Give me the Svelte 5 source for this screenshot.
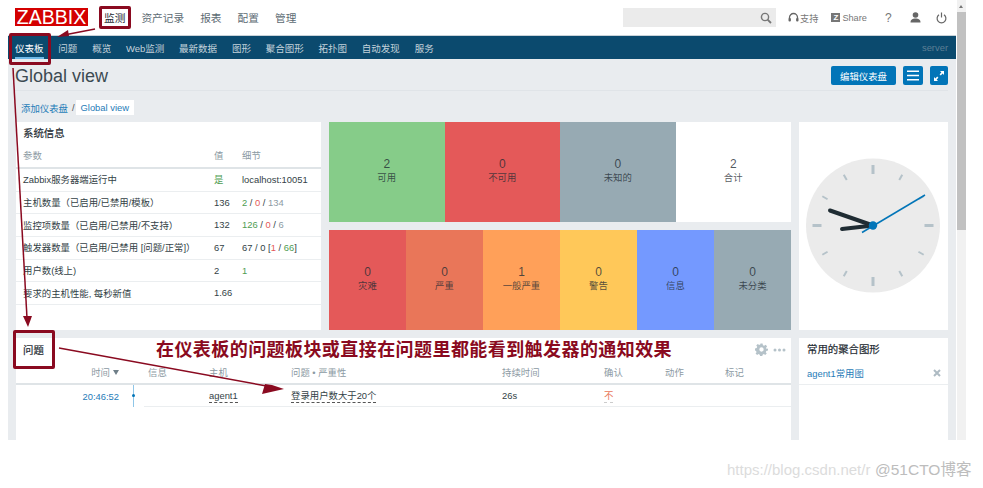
<script>
  const topnav = ['资产记录', '报表', '配置', '管理'];
  const subnav = ['问题', '概览', 'Web监测', '最新数据', '图形', '聚合图形', '拓扑图', '自动发现', '服务'];
  const hosts = [
    { n: 2, l: '可用', c: 'green' },
    { n: 0, l: '不可用', c: 'red' },
    { n: 0, l: '未知的', c: 'grey' },
    { n: 2, l: '合计', c: 'white' }
  ];
  const sev = [
    { n: 0, l: '灾难', c: 'red' },
    { n: 0, l: '严重', c: 'coral' },
    { n: 1, l: '一般严重', c: 'orange' },
    { n: 0, l: '警告', c: 'yellow' },
    { n: 0, l: '信息', c: 'blue' },
    { n: 0, l: '未分类', c: 'grey' }
  ];
  const ticks = Array.from({ length: 12 }, (_, i) => i * 30);
</script>

<div class="page">
  <header class="top">
    <div class="logo">ZABBIX</div>
    <nav class="mainnav">
      <span class="active">监测</span>
      {#each topnav as t}<span>{t}</span>{/each}
    </nav>
    <div class="search">
      <svg width="12" height="12" viewBox="0 0 12 12"><circle cx="5" cy="5" r="3.6" fill="none" stroke="#777" stroke-width="1.4"/><path d="M7.6 7.6 11 11" stroke="#777" stroke-width="1.8"/></svg>
    </div>
    <div class="tools">
      <span class="tool t-support">
        <svg width="11" height="12" viewBox="0 0 11 12"><path d="M1.5 7V5.5a4 4 0 0 1 8 0V7" fill="none" stroke="#666" stroke-width="1.3"/><rect x="0.5" y="6" width="2.4" height="3.6" rx="1" fill="#666"/><rect x="8.1" y="6" width="2.4" height="3.6" rx="1" fill="#666"/></svg>
        <span>支持</span>
      </span>
      <span class="tool t-share">
        <span class="zbox">Z</span>
        <span>Share</span>
      </span>
      <span class="tool t-help">?</span>
      <svg class="t-user" width="11" height="11" viewBox="0 0 11 11"><circle cx="5.5" cy="3" r="2.8" fill="#666"/><path d="M0.5 10.5c0-3 2-4 5-4s5 1 5 4z" fill="#666"/></svg>
      <svg class="t-power" width="11" height="12" viewBox="0 0 11 12"><path d="M3 2.8a4.4 4.4 0 1 0 5 0" fill="none" stroke="#666" stroke-width="1.2"/><path d="M5.5 0.5v5" stroke="#666" stroke-width="1.2"/></svg>
    </div>
  </header>

  <nav class="subnav">
    <span class="current">仪表板</span>
    {#each subnav as s}<span>{s}</span>{/each}
    <span class="server">server</span>
  </nav>

  <main class="content">
    <div class="titlebar">
      <h1>Global view</h1>
      <div class="actions">
        <button class="btn edit">编辑仪表盘</button>
        <button class="btn icon" aria-label="menu">
          <svg width="14" height="11" viewBox="0 0 14 11"><path d="M1 1.2h12M1 5.5h12M1 9.8h12" stroke="#fff" stroke-width="1.5"/></svg>
        </button>
        <button class="btn icon small" aria-label="fullscreen">
          <svg width="12" height="12" viewBox="0 0 12 12"><path d="M7 1h4v4L9.6 3.6 7.8 5.4 6.6 4.2 8.4 2.4zM5 11H1V7l1.4 1.4 1.8-1.8 1.2 1.2-1.8 1.8z" fill="#fff"/></svg>
        </button>
      </div>
    </div>

    <div class="crumbs">
      <a href="#a">添加仪表盘</a>
      <span class="sep">/</span>
      <span class="crumb">Global view</span>
    </div>

    <div class="grid">
      <section class="card sysinfo">
        <h2>系统信息</h2>
        <table>
          <colgroup><col class="c1" /><col class="c2" /><col /></colgroup>
          <thead><tr><th>参数</th><th>值</th><th>细节</th></tr></thead>
          <tbody>
            <tr><td>Zabbix服务器端运行中</td><td class="g">是</td><td>localhost:10051</td></tr>
            <tr><td>主机数量（已启用/已禁用/模板）</td><td>136</td><td><span class="g">2</span> / <span class="r">0</span> / <span class="m">134</span></td></tr>
            <tr><td>监控项数量（已启用/已禁用/不支持）</td><td>132</td><td><span class="g">126</span> / <span class="r">0</span> / <span class="m">6</span></td></tr>
            <tr><td>触发器数量（已启用/已禁用 [问题/正常]）</td><td>67</td><td>67 / 0 [<span class="r">1</span> / <span class="g">66</span>]</td></tr>
            <tr><td>用户数(线上)</td><td>2</td><td><span class="g">1</span></td></tr>
            <tr><td>要求的主机性能, 每秒新值</td><td>1.66</td><td></td></tr>
          </tbody>
        </table>
      </section>

      <section class="tiles hoststat">
        {#each hosts as h}
          <div class="tile {h.c}"><b>{h.n}</b><span>{h.l}</span></div>
        {/each}
      </section>

      <section class="card clock">
        <svg width="149" height="208" viewBox="0 0 149 208">
          <circle cx="74" cy="103.5" r="67" fill="#ebebeb"/>
          {#each ticks as a}
            <rect
              x={a % 90 === 0 ? 72.5 : 73}
              y={a % 90 === 0 ? 43 : 45}
              width={a % 90 === 0 ? 3 : 2}
              height={a % 90 === 0 ? 9 : 6}
              fill="#b5c2c9"
              transform="rotate({a} 74 103.5)"
            />
          {/each}
          <path d="M74 103.5 31 88.5" stroke="#1f2c33" stroke-width="4" stroke-linecap="round"/>
          <path d="M74 103.5 43 107" stroke="#1f2c33" stroke-width="4" stroke-linecap="round"/>
          <path d="M63 110.5 126 73" stroke="#0275b8" stroke-width="1.5"/>
          <circle cx="74" cy="103.5" r="4.2" fill="#0275b8"/>
        </svg>
      </section>

      <section class="tiles sevstat">
        {#each sev as s}
          <div class="tile {s.c}"><b>{s.n}</b><span>{s.l}</span></div>
        {/each}
      </section>

      <section class="card problems">
        <div class="wheader">
          <h2>问题</h2>
          <div class="wtools">
            <svg width="13" height="13" viewBox="0 0 24 24"><path fill="#b5c2c9" d="M10 1h4l.6 3.1 2.3 1 2.6-1.8 2.8 2.8-1.8 2.6 1 2.3L24 10v4l-3.1.6-1 2.3 1.8 2.6-2.8 2.8-2.6-1.8-2.3 1-.6 3.1h-4l-.6-3.1-2.3-1-2.6 1.8-2.8-2.8 1.8-2.6-1-2.3L0 14v-4l3.1-.6 1-2.3-1.8-2.6 2.8-2.8 2.6 1.8 2.3-1zM12 8a4 4 0 1 0 0 8 4 4 0 0 0 0-8z"/></svg>
            <svg width="13" height="4" viewBox="0 0 13 4"><circle cx="2" cy="2" r="1.5" fill="#b5c2c9"/><circle cx="6.5" cy="2" r="1.5" fill="#b5c2c9"/><circle cx="11" cy="2" r="1.5" fill="#b5c2c9"/></svg>
          </div>
        </div>
        <div class="prow phead">
          <span class="time">时间 <i class="down"></i></span><span class="mark"></span><span>信息</span><span>主机</span><span>问题 • 严重性</span><span>持续时间</span><span>确认</span><span>动作</span><span>标记</span>
        </div>
        <div class="prow pbody">
          <span class="time link">20:46:52</span>
          <span class="mark"><i></i></span>
          <span></span>
          <span><u>agent1</u></span>
          <span><u>登录用户数大于20个</u></span>
          <span>26s</span>
          <span><u class="no">不</u></span>
          <span></span>
          <span></span>
        </div>
      </section>

      <section class="card favs">
        <h2>常用的聚合图形</h2>
        <div class="favrow">
          <a href="#b">agent1常用图</a>
          <svg width="8" height="8" viewBox="0 0 8 8"><path d="M1 1l6 6M7 1 1 7" stroke="#aebbc3" stroke-width="2"/></svg>
        </div>
      </section>
    </div>
  </main>

  <div class="scrollbar">
    <span class="arrow"></span>
    <span class="thumb"></span>
  </div>

  <div class="hl hl-a"></div>
  <div class="hl hl-b"></div>
  <div class="hl hl-c"></div>

  <svg class="arrows" width="983" height="488" viewBox="0 0 983 488">
    <path d="M95 29 64 35" stroke="#8a0a20" stroke-width="1.5"/>
    <path d="M57 37 68 30 69 36z" fill="#8a0a20"/>
    <path d="M13 68 27 318" stroke="#8a0a20" stroke-width="1.5"/>
    <path d="M28 327 23 316 32 316z" fill="#8a0a20"/>
    <path d="M59 348 272 387" stroke="#8a0a20" stroke-width="1.5"/>
    <path d="M284 389 262 394 265 384 272 385z" fill="#8a0a20"/>
  </svg>

  <div class="note">在仪表板的问题板块或直接在问题里都能看到触发器的通知效果</div>

  <div class="wm wm1">https://blog.csdn.net/r</div>
  <div class="wm wm2">@51CTO博客</div>
</div>

<style>
  :global(body) {
    margin: 0;
    background: #fff;
  }
  .page {
    position: relative;
    width: 983px;
    height: 488px;
    overflow: hidden;
    font-family: "Liberation Sans", "Noto Sans CJK SC", sans-serif;
    color: #1f2c33;
    font-size: 9.4px;
  }
  .top {
    width: 948px;
    margin-left: 8px;
    height: 36px;
    box-sizing: border-box;
    display: flex;
    align-items: flex-start;
    padding: 0 8px 0 7px;
    background: #fff;
    border-bottom: 1px solid #c9d2d8;
  }
  .logo {
    width: 73px;
    height: 18px;
    margin-top: 8px;
    background: #d40000;
    color: #fff;
    font-size: 19.5px;
    line-height: 18px;
    text-align: center;
  }
  .mainnav {
    display: flex;
    gap: 16px;
    margin-left: 16px;
    margin-top: 11px;
    font-size: 10.7px;
    line-height: 14px;
    color: #5c6b73;
  }
  .mainnav .active {
    color: #1f2c33;
    position: relative;
    z-index: 3;
  }
  .search {
    width: 153px;
    height: 19px;
    margin-top: 8px;
    margin-left: auto;
    background: #ebebeb;
    display: flex;
    align-items: center;
    justify-content: flex-end;
    padding-right: 4px;
    box-sizing: border-box;
  }
  .tools {
    width: 172px;
    flex: none;
    margin-top: 10px;
    display: flex;
    align-items: center;
    height: 15px;
    color: #777;
    font-size: 9.2px;
    white-space: nowrap;
  }
  .tools > * { flex: none; }
  .tool {
    display: flex;
    align-items: center;
    gap: 1px;
  }
  .t-support { margin-left: 12px; }
  .t-share { margin-left: 13px; gap: 2px; }
  .zbox {
    width: 9px;
    height: 9px;
    background: #777;
    color: #fff;
    font-size: 8px;
    font-weight: 700;
    line-height: 9px;
    text-align: center;
  }
  .t-help { margin-left: 18px; font-size: 12px; }
  .t-user { margin-left: 18px; }
  .t-power { margin-left: 15px; }

  .subnav {
    width: 948px;
    margin-left: 8px;
    height: 23px;
    box-sizing: border-box;
    padding: 0 8px 0 7px;
    background: #0b4a6e;
    color: #c3d2db;
    display: flex;
    align-items: center;
    gap: 14.8px;
    font-size: 9.5px;
  }
  .subnav .current {
    color: #fff;
    position: relative;
    z-index: 3;
  }
  .subnav .current::after {
    content: "";
    position: absolute;
    left: 0;
    right: 0;
    top: 16px;
    height: 2px;
    background: #6fb9e6;
  }
  .subnav .server {
    margin-left: auto;
    color: #5d7f95;
    font-size: 9.4px;
  }

  .content {
    width: 948px;
    margin-left: 8px;
    height: 381px;
    overflow: hidden;
    background: #e9ecef;
    padding: 0 8px 0 7px;
    box-sizing: border-box;
  }
  .titlebar {
    height: 31px;
    border-bottom: 1px solid #e0e4e8;
    display: flex;
    justify-content: space-between;
    align-items: flex-start;
  }
  h1 {
    margin: 7px 0 0;
    font-size: 18px;
    font-weight: 400;
    line-height: 21px;
    color: #3c4a52;
  }
  .actions {
    display: flex;
    gap: 7px;
    margin-top: 7px;
  }
  .btn {
    border: 0;
    padding: 0;
    height: 19px;
    border-radius: 2px;
    background: #0275b8;
    color: #fff;
    font: inherit;
    font-size: 9.4px;
    display: flex;
    align-items: center;
    justify-content: center;
  }
  .edit { width: 65px; }
  .icon { width: 20px; }
  .icon.small { width: 18px; }

  .crumbs {
    display: flex;
    align-items: center;
    height: 15px;
    margin-top: 9px;
    padding-left: 6px;
    font-size: 9.4px;
  }
  .crumbs a { color: #1f7cb8; text-decoration: none; }
  .sep { margin: 0 1px 0 4px; color: #555; }
  .crumb {
    background: #fff;
    color: #1f7cb8;
    height: 15px;
    line-height: 15px;
    padding: 0 5px;
  }

  .grid {
    margin-top: 7px;
    margin-left: 1px;
    display: grid;
    grid-template-columns: 305px 239px 239px 149px;
    grid-template-rows: 100px 100px 110px;
    row-gap: 8px;
  }
  .card { background: #fff; }
  h2 {
    margin: 0;
    font-size: 10.4px;
    font-weight: 400;
    color: #1f2c33;
    -webkit-text-stroke: 0.2px #1f2c33;
  }

  .sysinfo {
    grid-column: 1;
    grid-row: 1 / 3;
  }
  .sysinfo h2 { padding: 5px 0 0 7px; line-height: 13px; }
  table {
    width: 100%;
    border-collapse: collapse;
    table-layout: fixed;
    margin-top: 3px;
  }
  .c1 { width: 198px; }
  .c2 { width: 28px; }
  th {
    text-align: left;
    font-weight: 400;
    color: #8c9aa3;
    height: 24px;
    padding: 0;
    border-bottom: 2px solid #dfe4e7;
  }
  th:first-child, td:first-child { padding-left: 7px; }
  td {
    height: 20.7px;
    padding: 0 0 1px;
    border-bottom: 1px solid #ebeef0;
    white-space: nowrap;
    color: #333f46;
  }
  .g { color: #4f9d52; }
  td.g { color: #4f9d52; }
  .r { color: #e45959; }
  .m { color: #8c9aa3; }

  .tiles {
    display: flex;
    grid-column: 2 / 4;
    margin-left: 8px;
    margin-right: 8px;
  }
  .hoststat { grid-row: 1; }
  .sevstat { grid-row: 2; }
  .tile {
    flex: 1;
    display: flex;
    flex-direction: column;
    align-items: center;
    justify-content: center;
    font-size: 9.4px;
    line-height: 13px;
    color: rgba(31, 44, 51, 0.78);
    padding-bottom: 2px;
    box-sizing: border-box;
  }
  .tile b {
    font-weight: 400;
    font-size: 12px;
    line-height: 13px;
  }
  .green { background: #86cc89; }
  .red { background: #e45959; }
  .grey { background: #97aab3; }
  .white { background: #fff; }
  .coral { background: #e97659; }
  .orange { background: #ffa059; }
  .yellow { background: #ffc859; }
  .blue { background: #7499ff; }

  .clock {
    grid-column: 4;
    grid-row: 1 / 3;
  }
  .clock svg { display: block; }

  .problems {
    grid-column: 1 / 4;
    grid-row: 3;
    margin-right: 8px;
  }
  .wheader {
    display: flex;
    justify-content: space-between;
    align-items: center;
    height: 23px;
    padding: 0 5px 0 7px;
  }
  .wtools {
    display: flex;
    align-items: center;
    gap: 5px;
  }
  .prow {
    display: grid;
    grid-template-columns: 117px 11px 65px 82px 211px 102px 61px 60px 1fr;
  }
  .prow > span { display: flex; align-items: center; }
  .phead {
    height: 24px;
    color: #8c9aa3;
    border-bottom: 2px solid #dfe4e7;
    box-sizing: border-box;
  }
  .phead > span:nth-child(3), .pbody > span:nth-child(3) { padding-left: 4px; }
  .time {
    justify-content: flex-end;
    padding-right: 14px;
    gap: 3px;
  }
  .down {
    width: 0;
    height: 0;
    border: 3px solid transparent;
    border-top: 5px solid #6f7f88;
    border-bottom: 0;
  }
  .pbody { height: 22px; color: #333f46; }
  .pbody > span:nth-child(n+3) { border-bottom: 1px solid #ebeef0; }
  .pbody .time.link { color: #1f7cb8; }
  .mark {
    position: relative;
    justify-content: flex-start;
  }
  .pbody .mark::before {
    content: "";
    position: absolute;
    left: 0;
    top: 0;
    bottom: 0;
    width: 1px;
    background: #8fc6e8;
  }
  .pbody .mark i {
    position: absolute;
    left: -1px;
    top: 9px;
    width: 3px;
    height: 3px;
    border-radius: 50%;
    background: #0275b8;
  }
  u {
    text-decoration: none;
    border-bottom: 1px dashed #555;
    line-height: 13px;
  }
  u.no { color: #e97659; border-bottom-color: #ccc; }

  .favs {
    grid-column: 4;
    grid-row: 3;
  }
  .favs h2 { padding: 5px 0 0 8px; line-height: 13px; }
  .favrow {
    margin-top: 6px;
    height: 23px;
    padding: 0 7px 0 8px;
    border-bottom: 1px solid #ebeef0;
    display: flex;
    align-items: center;
    justify-content: space-between;
    box-sizing: border-box;
  }
  .favrow a { color: #1f7cb8; text-decoration: none; }

  .scrollbar {
    position: absolute;
    left: 957px;
    top: 0;
    width: 9px;
    height: 440px;
    background: #f1f1f1;
  }
  .arrow {
    position: absolute;
    left: 2px;
    top: 5px;
    width: 0;
    height: 0;
    border: 2.5px solid transparent;
    border-bottom: 3px solid #777;
    border-top: 0;
  }
  .thumb {
    position: absolute;
    left: 0;
    right: 0;
    top: 12px;
    height: 218px;
    background: #c1c1c1;
  }

  .hl {
    position: absolute;
    border: 3px solid #8a0a20;
    border-radius: 2px;
    box-sizing: border-box;
  }
  .hl-a { left: 99px; top: 6px; width: 32px; height: 23px; }
  .hl-b { left: 9px; top: 33px; width: 42px; height: 32px; }
  .hl-c { left: 13px; top: 330px; width: 42px; height: 39px; }
  .arrows {
    position: absolute;
    left: 0;
    top: 0;
    pointer-events: none;
  }
  .note {
    position: absolute;
    left: 156px;
    top: 339px;
    font-size: 18px;
    line-height: 23px;
    font-weight: 700;
    letter-spacing: 0.43px;
    color: #8a0a20;
    white-space: nowrap;
  }
  .wm {
    position: absolute;
    white-space: nowrap;
  }
  .wm1 {
    left: 727px;
    top: 461px;
    font-size: 15px;
    line-height: 18px;
    color: #dcdcdc;
  }
  .wm2 {
    left: 875px;
    top: 461px;
    font-size: 15.5px;
    line-height: 18px;
    color: #bdbdbd;
  }
</style>
